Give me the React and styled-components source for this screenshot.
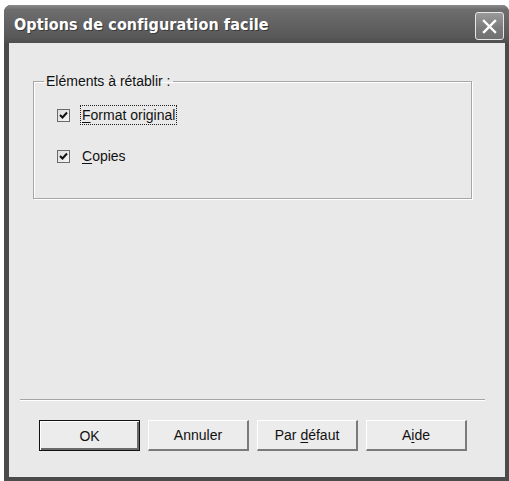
import React from 'react';
import styled, { createGlobalStyle } from 'styled-components';

const GlobalStyle = createGlobalStyle`
  html, body {
    margin: 0;
    padding: 0;
    background: #ffffff;
  }
  body {
    font-family: "Liberation Sans", Arial, sans-serif;
  }
`;

const Page = styled.div`
  width: 509px;
  height: 481px;
  padding: 5px 0 0 4px;
  box-sizing: border-box;
`;

const Window = styled.div`
  display: flex;
  flex-direction: column;
  width: 505px;
  height: 476px;
  background: #4a4a4a;
  border-radius: 7px 7px 0 0;
  overflow: hidden;
`;

const TitleBar = styled.div`
  display: flex;
  align-items: center;
  justify-content: space-between;
  height: 38px;
  padding: 0 5px 0 10px;
  background: linear-gradient(to bottom, #8a8a8a 0%, #6e6e6e 12%, #626262 50%, #585858 85%, #4e4e4e 100%);
  flex-shrink: 0;
`;

const Title = styled.div`
  font-family: "DejaVu Sans Condensed", "DejaVu Sans", sans-serif;
  font-weight: bold;
  font-size: 16px;
  color: #ffffff;
  text-shadow: 1px 1px 0 #3a3a3a;
  letter-spacing: 0.1px;
  margin-top: 1px;
`;

const CloseButton = styled.div`
  width: 29px;
  height: 28px;
  box-sizing: border-box;
  margin-top: 4px;
  border: 1px solid #e6e6e6;
  border-radius: 3px;
  background: linear-gradient(to bottom, #9a9a9a, #7a7a7a 60%, #707070);
  display: flex;
  align-items: center;
  justify-content: center;
`;

const Body = styled.div`
  flex: 1;
  margin: 0 4px 4px 5px;
  background: #e9e9e9;
  display: flex;
  flex-direction: column;
  padding: 30px 33px 0 24px;
`;

const GroupBox = styled.fieldset`
  margin: 0;
  height: 126px;
  box-sizing: border-box;
  padding: 16px 0 0 23px;
  border: 1px solid #a6a6a6;
  box-shadow: inset 1px 1px 0 #ffffff, 1px 1px 0 #ffffff;
  display: flex;
  flex-direction: column;
  gap: 21px;
`;

const Legend = styled.legend`
  font-size: 14px;
  color: #111;
  padding: 0 2px;
  margin-left: -13px;
`;

const CheckRow = styled.label`
  display: flex;
  align-items: center;
  gap: 10px;
  font-size: 14px;
  color: #111;
  height: 20px;
`;

const Box = styled.span`
  width: 11px;
  height: 11px;
  border: 1px solid #6a6a6a;
  background: linear-gradient(135deg, #dcdcdc, #f6f6f6);
  display: flex;
  align-items: center;
  justify-content: center;
`;

const Caption = styled.span`
  padding: 1px 1px;
  border: 1px ${({ $focused }) => ($focused ? 'dotted #222' : 'solid transparent')};
  u {
    text-decoration: underline;
    text-underline-offset: 2px;
  }
`;

const Spacer = styled.div`
  flex: 1;
`;

const Separator = styled.div`
  height: 1px;
  background: #a6a6a6;
  border-bottom: 1px solid #ffffff;
  margin: 0 -13px 0 -13px;
`;

const ButtonRow = styled.div`
  display: flex;
  gap: 8px;
  margin: 19px 0 26px 6px;
`;

const Button = styled.div`
  width: 101px;
  height: 31px;
  box-sizing: border-box;
  display: flex;
  align-items: center;
  justify-content: center;
  font-size: 14px;
  color: #111;
  background: #ececec;
  border-top: 1px solid #ffffff;
  border-left: 1px solid #ffffff;
  border-right: 2px solid #7a7a7a;
  border-bottom: 2px solid #7a7a7a;
  ${({ $primary }) =>
    $primary &&
    `
    border: 1px solid #111;
    box-shadow: inset 1px 1px 0 #ffffff, inset -2px -2px 0 #6a6a6a;
  `}
  u {
    text-underline-offset: 2px;
  }
`;

const Check = () => (
  <svg width="9" height="9" viewBox="0 0 9 9">
    <path d="M1 4 L3.5 6.5 L8 1.5" fill="none" stroke="#111" strokeWidth="2" />
  </svg>
);

const CheckBox = ({ children, focused }) => (
  <CheckRow>
    <Box><Check /></Box>
    <Caption $focused={focused}>{children}</Caption>
  </CheckRow>
);

export default function App() {
  return (
    <Page>
      <GlobalStyle />
      <Window>
        <TitleBar>
          <Title>Options de configuration facile</Title>
          <CloseButton>
            <svg width="15" height="15" viewBox="0 0 15 15">
              <path d="M2 2 L13 13 M13 2 L2 13" stroke="#ffffff" strokeWidth="2.4" strokeLinecap="square" />
            </svg>
          </CloseButton>
        </TitleBar>
        <Body>
          <GroupBox>
            <Legend>Eléments à rétablir :</Legend>
            <CheckBox focused><u>F</u>ormat original</CheckBox>
            <CheckBox><u>C</u>opies</CheckBox>
          </GroupBox>
          <Spacer />
          <Separator />
          <ButtonRow>
            <Button $primary>OK</Button>
            <Button>Annuler</Button>
            <Button><span>Par <u>d</u>éfaut</span></Button>
            <Button><span>A<u>i</u>de</span></Button>
          </ButtonRow>
        </Body>
      </Window>
    </Page>
  );
}
